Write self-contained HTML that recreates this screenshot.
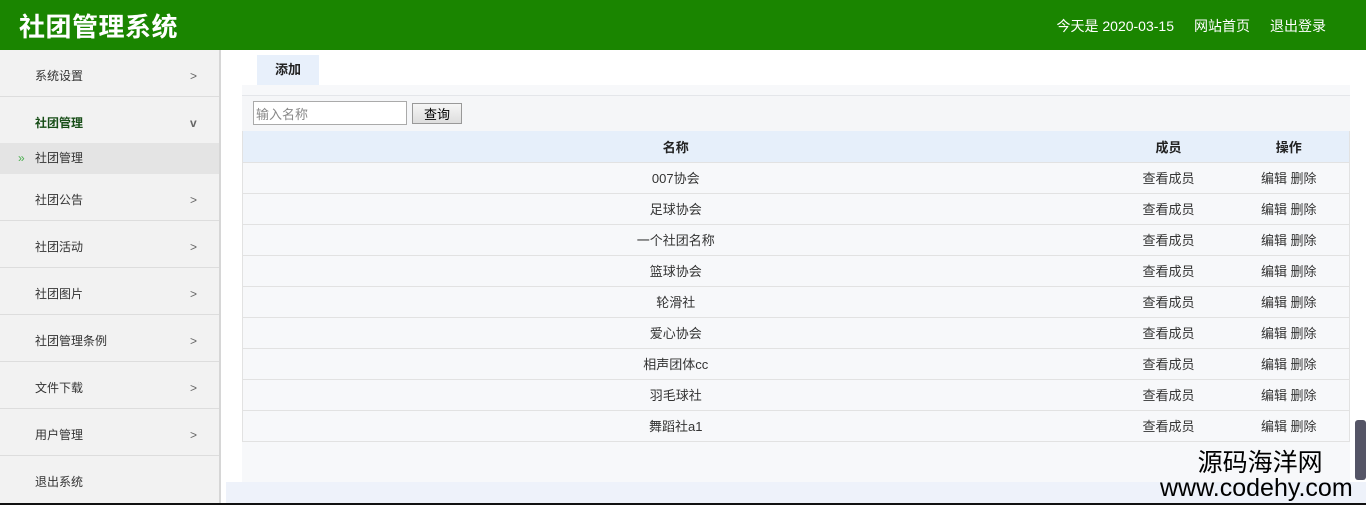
<!DOCTYPE html>
<html><head><meta charset="utf-8"><style>
*{margin:0;padding:0;box-sizing:border-box}
body{width:1366px;height:505px;overflow:hidden;background:#fff;font-family:"Liberation Sans","Noto Sans CJK SC",sans-serif;font-size:13px;color:#333;position:relative}
.hd{position:absolute;left:0;top:0;width:1366px;height:50px;background:#1a8500;color:#fff}
.hd h1{position:absolute;left:19px;top:7px;font-size:26px;font-weight:bold;letter-spacing:0.5px}
.hd .r{position:absolute;right:40px;top:16px;font-size:14px}
.hd .r span{margin-left:20px}
.sb{position:absolute;left:0;top:50px;width:221px;height:453px;background:#f2f2f2;border-right:2px solid #d6d6d6}
.it{height:47px;border-bottom:1px solid #ddd;position:relative;line-height:53px;padding-left:35px;font-size:12px;color:#333}
.it i{position:absolute;left:190px;font-style:normal;color:#666;font-size:12px}
.it.on{color:#174d17;font-weight:bold;border-bottom:none;height:46px}
.sub{height:31px;line-height:31px;background:#e4e4e4;padding-left:35px;font-size:12px;position:relative;color:#333}
.sub b{position:absolute;left:18px;color:#4caf50;font-weight:normal;font-size:12px}
.main{position:absolute;left:226px;top:50px;width:1140px;height:432px;background:#fff}
.foot{position:absolute;left:226px;top:482px;width:1140px;height:21px;background:#eef2fa}
.bl{position:absolute;left:0;top:503px;width:1366px;height:2px;background:#111}
.tab{position:absolute;left:257px;top:55px;width:62px;height:30px;background:#e8f0fb;text-align:center;line-height:30px;font-weight:bold;font-size:13px;color:#222}
.panel{position:absolute;left:242px;top:85px;width:1108px;height:397px;background:#f7f8fa}
.srch{position:absolute;left:242px;top:95px;width:1108px;height:36px;background:#f5f6f8;border-top:1px solid #e4e6ea}
.srch input{position:absolute;left:11px;top:5px;width:154px;height:24px;border:1px solid #aaa;font-size:13px;padding-left:2px;color:#888;font-family:inherit}
.srch button{position:absolute;left:170px;top:7px;width:50px;height:21px;border:1px solid #999;background:linear-gradient(#f6f6f6,#ddd);font-size:13px;font-family:inherit}
table{position:absolute;left:242px;top:131px;width:1108px;border-collapse:collapse;font-size:13px}
td,th{height:31px;text-align:center;border-bottom:1px solid #e2e2e2}
th{background:#e6effa;font-weight:bold;color:#222}
td{background:#f7f8fa}
table{border-left:1px solid #e2e2e2;border-right:1px solid #e2e2e2}
.wm{position:absolute;left:1160px;top:451px;font-size:25px;color:#000;text-align:right;line-height:25px}
.wm div:first-child{padding-right:30px}
.sc{position:absolute;left:1355px;top:420px;width:11px;height:60px;background:#556;border-radius:3px}
</style></head><body>
<div class="hd"><h1>社团管理系统</h1><div class="r">今天是 2020-03-15<span>网站首页</span><span>退出登录</span></div></div>
<div class="sb">
<div class="it">系统设置<i>&gt;</i></div>
<div class="it on">社团管理<i>v</i></div>
<div class="sub"><b>»</b>社团管理</div>
<div class="it">社团公告<i>&gt;</i></div>
<div class="it">社团活动<i>&gt;</i></div>
<div class="it">社团图片<i>&gt;</i></div>
<div class="it">社团管理条例<i>&gt;</i></div>
<div class="it">文件下载<i>&gt;</i></div>
<div class="it">用户管理<i>&gt;</i></div>
<div class="it" style="border:none">退出系统</div>
</div>
<div class="main"></div>
<div class="panel"></div>
<div class="tab">添加</div>
<div class="srch"><input value="输入名称"><button>查询</button></div>
<table>
<tr><th style="width:866px">名称</th><th style="width:120px">成员</th><th>操作</th></tr>
<tr><td>007协会</td><td>查看成员</td><td>编辑 删除</td></tr>
<tr><td>足球协会</td><td>查看成员</td><td>编辑 删除</td></tr>
<tr><td>一个社团名称</td><td>查看成员</td><td>编辑 删除</td></tr>
<tr><td>篮球协会</td><td>查看成员</td><td>编辑 删除</td></tr>
<tr><td>轮滑社</td><td>查看成员</td><td>编辑 删除</td></tr>
<tr><td>爱心协会</td><td>查看成员</td><td>编辑 删除</td></tr>
<tr><td>相声团体cc</td><td>查看成员</td><td>编辑 删除</td></tr>
<tr><td>羽毛球社</td><td>查看成员</td><td>编辑 删除</td></tr>
<tr><td>舞蹈社a1</td><td>查看成员</td><td>编辑 删除</td></tr>
</table>
<div class="foot"></div>
<div class="bl"></div>
<div class="sc"></div>
<div class="wm"><div>源码海洋网</div><div>www.codehy.com</div></div>
</body></html>
